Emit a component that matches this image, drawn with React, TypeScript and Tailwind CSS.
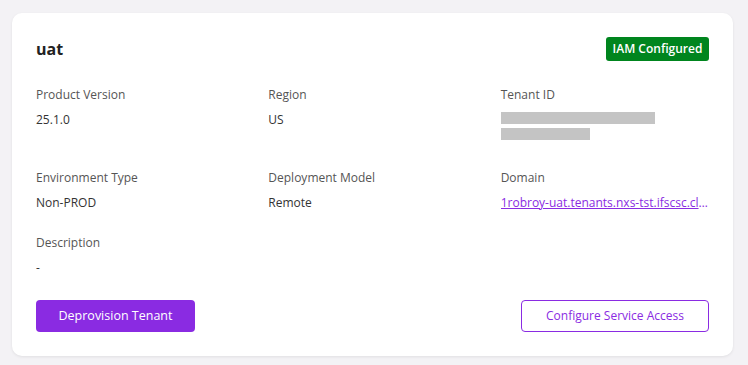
import React from "react";

const font = { fontFamily: '"Open Sans", "Noto Sans", sans-serif' };

function Field({ label, children }: { label: string; children: React.ReactNode }) {
  return (
    <div className="min-w-0">
      <div className="text-[12px] leading-[18px] text-[#555555]">{label}</div>
      <div className="mt-[7px] text-[12px] leading-[18px] text-[#333333]">{children}</div>
    </div>
  );
}

export default function App() {
  return (
    <div className="min-h-[365px] w-[748px] bg-[#f3f2f5] pt-[13px] pl-[12px]" style={font}>
      <div className="w-[721px] rounded-[10px] bg-white p-[24px] shadow-[0_1px_3px_rgba(0,0,0,0.08)]">
        <div className="flex h-[24px] items-center justify-between">
          <div className="text-[16px] font-bold leading-[24px] text-[#222222]">uat</div>
          <div className="flex h-[24px] w-[103px] items-center justify-center rounded-[3px] bg-[#00851e] text-[12px] font-semibold text-white">
            IAM Configured
          </div>
        </div>

        <div className="mt-[25px] grid grid-cols-3 gap-x-[24px]">
          <Field label="Product Version">25.1.0</Field>
          <Field label="Region">US</Field>
          <div className="min-w-0">
            <div className="text-[12px] leading-[18px] text-[#555555]">Tenant ID</div>
            <div className="mt-[8px] h-[12px] w-[154px] bg-[#c4c4c4]" />
            <div className="mt-[4px] h-[12px] w-[89px] bg-[#c4c4c4]" />
          </div>
        </div>

        <div className="mt-[29px] grid grid-cols-3 gap-x-[24px]">
          <Field label="Environment Type">Non-PROD</Field>
          <Field label="Deployment Model">Remote</Field>
          <Field label="Domain">
            <a className="block truncate text-[#8a2be2] underline" href="#">
              1robroy-uat.tenants.nxs-tst.ifscsc.cloud
            </a>
          </Field>
        </div>

        <div className="mt-[22px] grid grid-cols-3 gap-x-[24px]">
          <Field label="Description">-</Field>
        </div>

        <div className="mt-[23px] flex items-center justify-between">
          <button className="h-[32px] w-[159px] rounded-[4px] bg-[#8a2be2] text-[12.5px] font-medium text-white">
            Deprovision Tenant
          </button>
          <button className="h-[32px] w-[188px] rounded-[4px] border border-[#8a2be2] bg-white text-[12px] text-[#8a2be2]">
            Configure Service Access
          </button>
        </div>
      </div>
    </div>
  );
}
